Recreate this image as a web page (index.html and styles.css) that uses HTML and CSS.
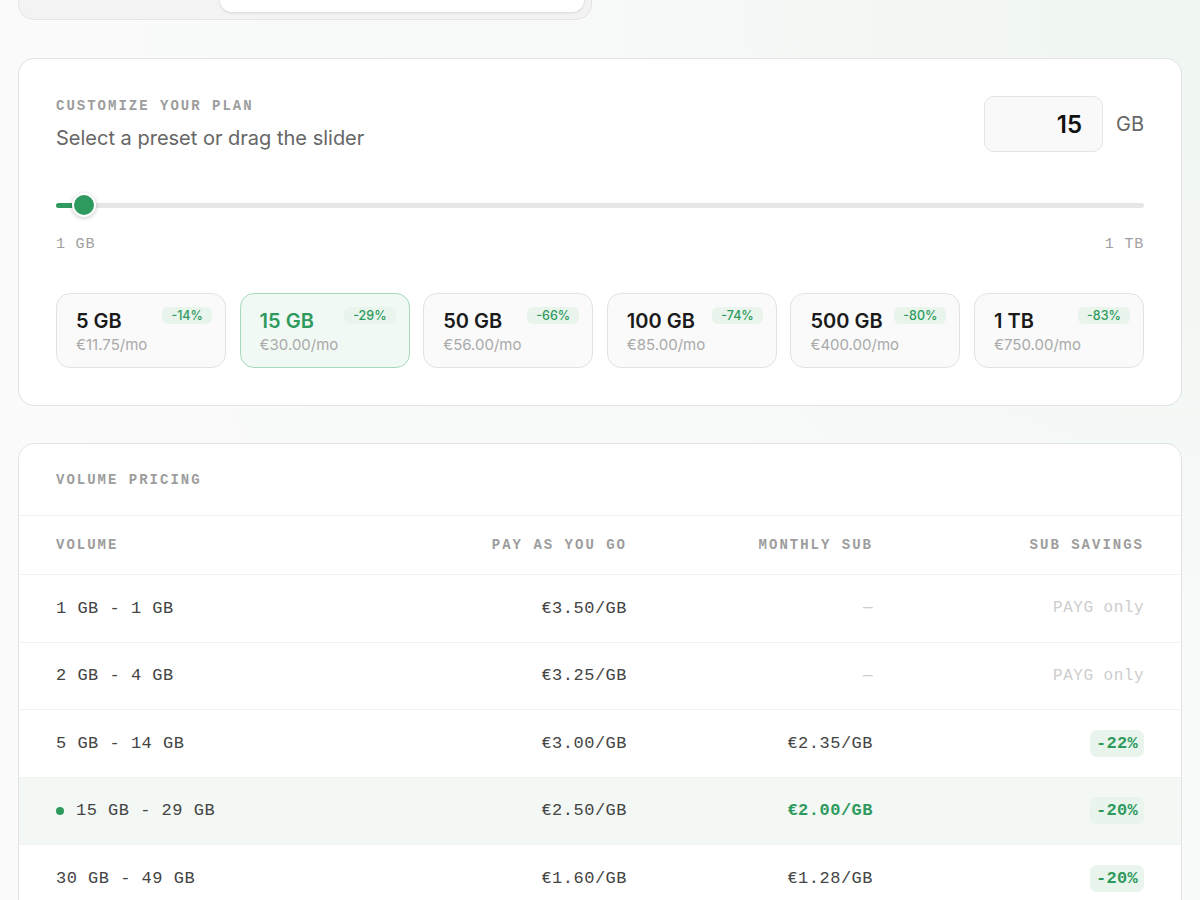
FILE: index.html
```html
<!DOCTYPE html>
<html lang="en">
<head>
  <meta charset="UTF-8" />
  <title>Storage Pricing</title>
  <link rel="stylesheet" href="styles.css">
</head>
<body>
  <div class="page">
    <!-- Billing toggle (scrolled mostly out of view) -->
    <div class="billing-toggle">
      <div class="toggle-slot"></div>
      <div class="toggle-pill"></div>
    </div>

    <!-- Customize plan -->
    <section class="card plan-card">
      <div class="plan-head">
        <div>
          <p class="eyebrow">Customize your plan</p>
          <p class="plan-subtitle">Select a preset or drag the slider</p>
        </div>
        <div class="amount">
          <input class="amount-input" type="text" value="15" />
          <span class="amount-unit">GB</span>
        </div>
      </div>

      <div class="slider">
        <div class="slider-track">
          <div class="slider-fill" style="width: 28px;"></div>
        </div>
        <div class="slider-thumb" style="left: 16px;"></div>
      </div>
      <div class="slider-labels">
        <span>1 GB</span>
        <span>1 TB</span>
      </div>

      <div class="presets">
        <button class="preset">
          <span class="preset-top"><span class="preset-size">5 GB</span><span class="badge">-14%</span></span>
          <span class="preset-price">€11.75/mo</span>
        </button>
        <button class="preset active">
          <span class="preset-top"><span class="preset-size">15 GB</span><span class="badge">-29%</span></span>
          <span class="preset-price">€30.00/mo</span>
        </button>
        <button class="preset">
          <span class="preset-top"><span class="preset-size">50 GB</span><span class="badge">-66%</span></span>
          <span class="preset-price">€56.00/mo</span>
        </button>
        <button class="preset">
          <span class="preset-top"><span class="preset-size">100 GB</span><span class="badge">-74%</span></span>
          <span class="preset-price">€85.00/mo</span>
        </button>
        <button class="preset">
          <span class="preset-top"><span class="preset-size">500 GB</span><span class="badge">-80%</span></span>
          <span class="preset-price">€400.00/mo</span>
        </button>
        <button class="preset">
          <span class="preset-top"><span class="preset-size">1 TB</span><span class="badge">-83%</span></span>
          <span class="preset-price">€750.00/mo</span>
        </button>
      </div>
    </section>

    <!-- Volume pricing table -->
    <section class="card table-card">
      <div class="table-title">
        <p class="eyebrow">Volume pricing</p>
      </div>
      <div class="tier-row tier-head">
        <span>Volume</span>
        <span class="num">Pay as you go</span>
        <span class="num">Monthly sub</span>
        <span class="num">Sub savings</span>
      </div>
      <div class="tier-row">
        <span>1 GB - 1 GB</span>
        <span class="num">€3.50/GB</span>
        <span class="num muted">—</span>
        <span class="num muted">PAYG only</span>
      </div>
      <div class="tier-row">
        <span>2 GB - 4 GB</span>
        <span class="num">€3.25/GB</span>
        <span class="num muted">—</span>
        <span class="num muted">PAYG only</span>
      </div>
      <div class="tier-row">
        <span>5 GB - 14 GB</span>
        <span class="num">€3.00/GB</span>
        <span class="num">€2.35/GB</span>
        <span class="num"><span class="saving">-22%</span></span>
      </div>
      <div class="tier-row current">
        <span class="tier-range"><span class="dot"></span>15 GB - 29 GB</span>
        <span class="num">€2.50/GB</span>
        <span class="num strong">€2.00/GB</span>
        <span class="num"><span class="saving">-20%</span></span>
      </div>
      <div class="tier-row">
        <span>30 GB - 49 GB</span>
        <span class="num">€1.60/GB</span>
        <span class="num">€1.28/GB</span>
        <span class="num"><span class="saving">-20%</span></span>
      </div>
      <div class="tier-row">
        <span>50 GB - 99 GB</span>
        <span class="num">€1.12/GB</span>
        <span class="num">€0.85/GB</span>
        <span class="num"><span class="saving">-24%</span></span>
      </div>
    </section>
  </div>
</body>
</html>
```

FILE: styles.css
```css
/* Reset & Body */
* {
  margin: 0;
  padding: 0;
  box-sizing: border-box;
}
body {
  font-family: 'Inter', 'Noto Sans', sans-serif;
  background: radial-gradient(circle at 100% 0%, #eff5f1 0, #f7faf8 40%, #fbfbfb 100%);
  min-height: 100vh;
  color: #1a1a1a;
}
.page {
  padding: 0 18px 40px;
}

/* Billing toggle */
.billing-toggle {
  display: flex;
  width: 574px;
  height: 60px;
  margin-top: -40px;
  padding: 7px;
  background: #f3f3f3;
  border: 1px solid #e4e4e4;
  border-radius: 16px;
}
.toggle-slot {
  width: 194px;
}
.toggle-pill {
  flex: 1;
  background: #fff;
  border-radius: 12px;
  box-shadow: 0 1px 3px rgba(0,0,0,0.12);
}

/* Cards */
.card {
  background: #fff;
  border: 1px solid #e3e3e3;
  border-radius: 16px;
}
.plan-card {
  margin-top: 38px;
  padding: 37px;
}
.eyebrow {
  font-family: 'Liberation Mono', monospace;
  font-size: 14px;
  line-height: 16px;
  font-weight: 700;
  letter-spacing: 2px;
  text-transform: uppercase;
  color: #9d9d9d;
}

/* Plan header */
.plan-head {
  display: flex;
  justify-content: space-between;
  align-items: flex-start;
}
.plan-head .eyebrow {
  margin-top: 2px;
}
.plan-subtitle {
  margin-top: 10px;
  font-size: 20px;
  line-height: 28px;
  color: #666;
}
.amount {
  display: flex;
  align-items: center;
  gap: 13px;
}
.amount-input {
  width: 119px;
  height: 56px;
  padding: 0 20px;
  border: 1px solid #e4e4e4;
  border-radius: 10px;
  background: #f9f9f9;
  font-family: 'Inter', sans-serif;
  font-size: 24px;
  font-weight: 600;
  color: #111;
  text-align: right;
}
.amount-unit {
  font-size: 20px;
  color: #666;
}

/* Slider */
.slider {
  position: relative;
  height: 24px;
  margin-top: 41px;
  display: flex;
  align-items: center;
}
.slider-track {
  width: 100%;
  height: 5px;
  border-radius: 3px;
  background: #e6e6e6;
}
.slider-fill {
  height: 100%;
  border-radius: 3px;
  background: #2f9a5e;
}
.slider-thumb {
  position: absolute;
  top: 0;
  width: 24px;
  height: 24px;
  border-radius: 50%;
  background: #2f9a5e;
  border: 2px solid #fff;
  box-shadow: 0 1px 4px rgba(0,0,0,0.22);
}
.slider-labels {
  display: flex;
  justify-content: space-between;
  margin-top: 19px;
  font-family: 'Liberation Mono', monospace;
  font-size: 15px;
  line-height: 18px;
  letter-spacing: 0.8px;
  color: #a0a0a0;
}

/* Presets */
.presets {
  display: grid;
  grid-template-columns: repeat(6, 1fr);
  gap: 13.6px;
  margin-top: 39px;
}
.preset {
  display: flex;
  flex-direction: column;
  height: 75px;
  padding: 13px 13px 0 19px;
  border: 1px solid #e2e2e2;
  border-radius: 14px;
  background: #fafafa;
  font-family: inherit;
  text-align: left;
  cursor: pointer;
}
.preset-top {
  display: flex;
  justify-content: space-between;
  align-items: flex-start;
}
.preset-size {
  margin-top: 2px;
  font-size: 20px;
  line-height: 24px;
  font-weight: 600;
  color: #1a1a1a;
}
.preset-price {
  margin-top: 2px;
  font-size: 15px;
  line-height: 20px;
  color: #a9a9a9;
}
.badge {
  padding: 0 9px;
  height: 17px;
  line-height: 17px;
  border-radius: 6px;
  background: #e8f4ec;
  color: #2f9a5e;
  font-size: 12.5px;
  font-weight: 500;
}
.preset.active {
  border-color: #a6d9b9;
  background: #f1f9f4;
}
.preset.active .preset-size {
  color: #2f9a5e;
}

/* Volume table */
.table-card {
  margin-top: 37px;
  overflow: hidden;
}
.table-title {
  height: 72px;
  display: flex;
  align-items: center;
  padding: 0 37px;
  border-bottom: 1px solid #f0f0f0;
}
.tier-row {
  display: grid;
  grid-template-columns: 330px 241px 246px 1fr;
  align-items: center;
  height: 67.5px;
  padding: 0 37px;
  border-bottom: 1px solid #f2f2f2;
  font-family: 'Liberation Mono', monospace;
  font-size: 17px;
  letter-spacing: 0.5px;
  color: #444;
}
.tier-head {
  height: 59px;
  font-size: 14px;
  font-weight: 700;
  letter-spacing: 2px;
  text-transform: uppercase;
  color: #9d9d9d;
}
.num {
  text-align: right;
}
.muted {
  color: #cdcdcd;
  font-size: 16px;
}
.strong {
  font-weight: 700;
  color: #2f9a5e;
}
.tier-row.current {
  background: #f3f8f4;
}
.tier-range {
  display: flex;
  align-items: center;
  gap: 12px;
}
.dot {
  width: 8px;
  height: 8px;
  border-radius: 50%;
  background: #2f9a5e;
}
.saving {
  display: inline-block;
  padding: 0 6px;
  height: 27px;
  line-height: 27px;
  border-radius: 7px;
  background: #e8f4ec;
  color: #2f9a5e;
  font-weight: 700;
  font-size: 17px;
  letter-spacing: 0.3px;
}
```
